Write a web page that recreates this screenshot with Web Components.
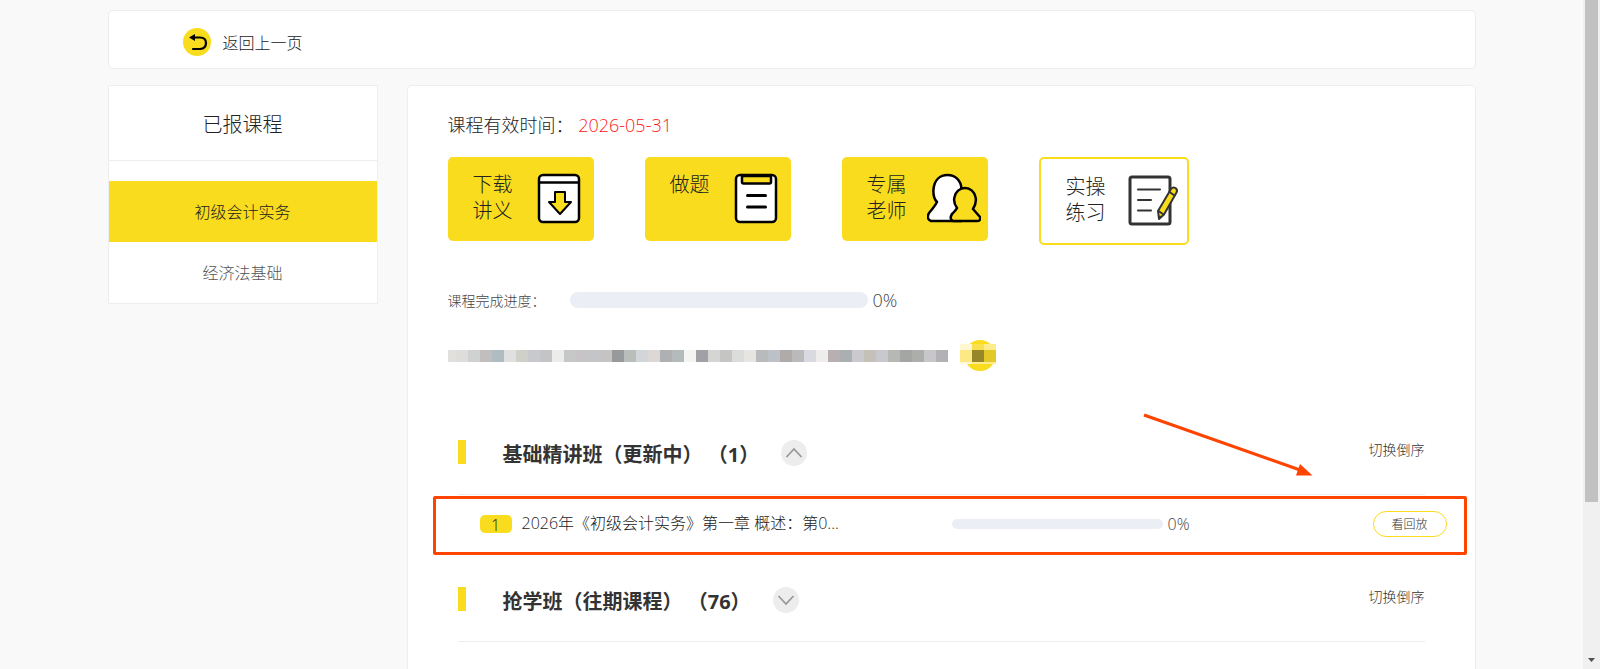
<!DOCTYPE html>
<html lang="zh-CN">
<head>
<meta charset="UTF-8">
<meta name="viewport" content="width=device-width, initial-scale=1.0">
<title>已报课程</title>
<style>
  body {
    margin: 0;
    background: #f9f9f9;
    color: #222;
    font-family: 'Open Sans', 'Noto Sans CJK SC', sans-serif;
    font-size: 16px;
    font-weight: 300;
    --yellow: #f9dc1e;
    --line: #eee;
    --mark: #ff4400;
  }
</style>
</head>
<body>
<course-page>
  <back-bar slot="top">返回上一页</back-bar>
  <course-menu slot="side" heading="已报课程" items='["初级会计实务","经济法基础"]'></course-menu>
  <course-detail date="2026-05-31">
    <tool-card slot="tools" icon="download">下载<br>讲义</tool-card>
    <tool-card slot="tools" icon="paper">做题</tool-card>
    <tool-card slot="tools" icon="teacher">专属<br>老师</tool-card>
    <tool-card slot="tools" icon="practice" outline>实操<br>练习</tool-card>
    <class-section heading="基础精讲班（更新中） （1）" open>
      <lesson-row no="1">2026年《初级会计实务》第一章 概述：第0...</lesson-row>
    </class-section>
    <class-section heading="抢学班（往期课程） （76）"></class-section>
  </course-detail>
</course-page>

<script>
const icons = {
  download: `
    <svg width="54" height="54" viewBox="0 0 54 54" fill="none" stroke="#000" stroke-width="2.500">
      <rect x="6" y="3" width="40" height="47" rx="4" fill="#fff"/>
      <path d="M6 10.500H46"/>
      <path d="M22 20h10v10h6L27 42 16 30h6z" fill="#f9dc1e" stroke-width="2" stroke-linejoin="round"/>
    </svg>`,
  paper: `
    <svg width="54" height="54" viewBox="0 0 54 54" fill="none" stroke="#000" stroke-width="2.500">
      <rect x="6" y="3" width="40" height="47" rx="4" fill="#fff"/>
      <path d="M12 4h29v6q0 1.500-1.500 1.500h-26Q12 11.500 12 10z" fill="#f9dc1e"/>
      <path d="M17.500 23.500h18M17.500 35h18" stroke-width="3" stroke-linecap="round"/>
    </svg>`,
  teacher: `
    <svg width="54" height="54" viewBox="0 0 54 54" stroke="#000" stroke-width="2.500" stroke-linejoin="round">
      <path d="M10 30C7 27 6 23 6.500 17 7.500 8 13 3 20.500 3S34 8 34.500 17v32H4Q-1 47 2 41Q8 34 10 30z" fill="#fff"/>
      <path d="M30 36C27 32 26.500 29 27.500 25c1-5 5-9 10.500-9s9.500 4 10.500 9c1 4 0 8-2.500 12l7 8Q54 49 50 49H26Q22 47 25 42Q29 38 30 36z" fill="#f9dc1e"/>
    </svg>`,
  practice: `
    <svg width="54" height="54" viewBox="0 0 54 54" fill="none" stroke="#333" stroke-width="2.500" stroke-linecap="round">
      <rect x="4" y="3" width="40" height="47" rx="2" fill="#fff" stroke-width="3"/>
      <path d="M12 15.500h22M12 26h13M12 36.500h13" stroke-width="2"/>
      <path d="M32 37 45 15q2-2.500 4.500-1 2.500 2 1 4.500L38 40.500 33 45z" fill="#f9dc1e" stroke-width="2" stroke-linejoin="round"/>
      <path d="M43.500 18l5 3.500M32.500 37l5 3.500M33 43.500l1-1" stroke-width="2"/>
    </svg>`,
  back: `
    <svg width="28" height="28" viewBox="0 0 28 28" fill="none">
      <circle cx="14" cy="14" r="14" fill="#f9dc1e"/>
      <path d="M11 9.500h6q6 0 6 5.500t-6 6h-7" stroke="#000" stroke-width="2.200" stroke-linecap="round"/>
      <path d="M6 9.500 12 6v7z" fill="#000"/>
    </svg>`,
  chevron: `
    <svg width="26" height="26" viewBox="0 0 26 26" fill="none">
      <circle cx="13" cy="13" r="13" fill="#ededed"/>
      <path d="M5.500 17 13 9l7.500 8" stroke="#999" stroke-width="1.800"/>
    </svg>`,
};

// 页面整体框架
class CoursePage extends HTMLElement {
  constructor() {
    super();
    this.attachShadow({ mode: 'open' }).innerHTML = `
<style>
  :host {
    display: flex;
    height: 100vh;
    overflow: hidden;
  }
  .page {
    flex: 1;
    min-width: 0;
    padding: 10px 20px 0;
  }
  .wrap {
    max-width: 1368px;
    margin: 0 auto;
  }
  .columns {
    display: flex;
    align-items: flex-start;
    gap: 29px;
    margin-top: 16px;
  }
  .scroll {
    display: flex;
    flex-direction: column;
    justify-content: space-between;
    align-items: center;
    width: 17px;
    background: #f0f0f0;
  }
  .thumb {
    width: 13px;
    height: 75%;
    background: #c1c1c1;
  }
  .scroll svg {
    margin-bottom: 7px;
  }
</style>
<div class="page">
  <div class="wrap">
    <slot name="top"></slot>
    <div class="columns">
      <slot name="side"></slot>
      <slot></slot>
    </div>
  </div>
</div>
<div class="scroll">
  <div class="thumb"></div>
  <svg width="7" height="4"><path d="M0 0h7L3.500 4z" fill="#505050"/></svg>
</div>`;
  }
}

class BackBar extends HTMLElement {
  constructor() {
    super();
    this.attachShadow({ mode: 'open' }).innerHTML = `
<style>
  :host {
    display: block;
    background: #fff;
    border: 1px solid var(--line);
    border-radius: 5px;
  }
  a {
    display: inline-flex;
    align-items: center;
    gap: 12px;
    height: 57px;
    margin-left: 74px;
    padding-top: 4px;
    box-sizing: border-box;
    color: inherit;
    text-decoration: none;
  }
</style>
<a href="#">${ icons.back }<slot></slot></a>`;
  }
}

// 左侧课程菜单
class CourseMenu extends HTMLElement {
  connectedCallback() {
    const items = JSON.parse(this.getAttribute('items'));
    this.attachShadow({ mode: 'open' }).innerHTML = `
<style>
  :host {
    display: block;
    flex: none;
    box-sizing: border-box;
    width: 270px;
    background: #fff;
    border: 1px solid var(--line);
  }
  h2 {
    margin: 0 0 20px;
    padding-top: 4px;
    border-bottom: 1px solid var(--line);
    font-size: 20px;
    font-weight: inherit;
    line-height: 70px;
    text-align: center;
  }
  a {
    display: block;
    padding-top: 1px;
    color: #555;
    line-height: 60px;
    text-align: center;
    text-decoration: none;
  }
  a.active {
    background: var(--yellow);
    color: #222;
  }
</style>
<h2>${ this.getAttribute('heading') }</h2>
<nav>
  ${ items.map((item, i) => `<a href="#" class="${ i === 0 ? 'active' : '' }">${ item }</a>`).join('') }
</nav>`;
  }
}

// 功能入口卡片
class ToolCard extends HTMLElement {
  connectedCallback() {
    this.attachShadow({ mode: 'open' }).innerHTML = `
<style>
  :host {
    display: block;
  }
  a {
    display: flex;
    justify-content: space-between;
    box-sizing: border-box;
    width: 146px;
    height: 84px;
    padding: 15px 7px 0 25px;
    border-radius: 5px;
    background: var(--yellow);
    color: inherit;
    font-size: 20px;
    line-height: 26px;
    text-decoration: none;
  }
  :host([outline]) a {
    width: 150px;
    height: 88px;
    border: 2px solid var(--yellow);
    background: #fff;
  }
</style>
<a href="#"><span><slot></slot></span>${ icons[this.getAttribute('icon')] }</a>`;
  }
}

class ProgressLine extends HTMLElement {
  connectedCallback() {
    this.attachShadow({ mode: 'open' }).innerHTML = `
<style>
  :host {
    display: flex;
    align-items: center;
    gap: 5px;
    color: #444;
    font-size: 16px;
  }
  .bar {
    width: 211px;
    height: 10px;
    border-radius: 100px;
    background: #ebeef5;
  }
  :host([large]) {
    font-size: 18px;
  }
  :host([large]) .bar {
    width: 298px;
    height: 16px;
  }
</style>
<div class="bar" role="progressbar" aria-label="完成进度" aria-valuenow="0" aria-valuemin="0" aria-valuemax="100"></div>
<span>0%</span>`;
  }
}

// 打码的一行信息
const cells = [
  '#e0e0dc', '#dedddb', '#cfd2d0', '#c1bfbd', '#afbcc2', '#e0e0e0', '#cfd0ca', '#c8c9cc', '#c4c4c6', '#ececea',
  '#c5c8c6', '#c6c4c6', '#c3c5c8', '#c6c4c2', '#98999b', '#b9beba', '#d2d6d8', '#ddd8d6', '#aeb0b3', '#b5babb',
  '#f4f4f2', '#a1a0a6', '#d5d5d3', '#c5c5c3', '#dbdddd', '#e6e5df', '#b8babc', '#bbc1c6', '#b0aaa8', '#bababa',
  '#d9dae1', '#efedeb', '#b8afb1', '#aaafb1', '#cac9ce', '#c6c1b8', '#c8c9ce', '#b7b8b3', '#a4a6a3', '#acaeab',
  '#c7c7c9', '#b4b1b6',
];

class MaskedInfo extends HTMLElement {
  connectedCallback() {
    const rects = cells.map((color, i) => {
      const x = i === 0 ? 0 : i * 12 - 4;
      return `<rect x="${ x }" y="10" width="${ i === 0 ? 8 : 12 }" height="12" fill="${ color }"/>`;
    }).join('');
    this.attachShadow({ mode: 'open' }).innerHTML = `
<style>
  :host {
    display: block;
    height: 31px;
  }
  svg {
    display: block;
  }
</style>
<svg width="560" height="31" shape-rendering="crispEdges">
  ${ rects }
  <circle cx="532" cy="15.500" r="15.500" fill="#f9dc1e" shape-rendering="auto"/>
  <path d="M512 4h12v20h-12z" fill="#fef7d2"/>
  <path d="M524 4h24v6h-24zM524 22h24v2h-24z" fill="#fcec8c"/>
  <path d="M524 4h12v6h-12z" fill="#f9e050"/>
  <path d="M512 10h12v12h-12z" fill="#fce985"/>
  <path d="M524 10h12v12h-12z" fill="#988729"/>
  <path d="M536 10h12v12h-12z" fill="#e3c928"/>
</svg>`;
  }
}

class CourseDetail extends HTMLElement {
  connectedCallback() {
    this.attachShadow({ mode: 'open' }).innerHTML = `
<style>
  :host {
    display: block;
    flex: 1;
    min-width: 0;
    min-height: 100vh;
    box-sizing: border-box;
    padding: 27px 40px 0;
    background: #fff;
    border: 1px solid var(--line);
    border-radius: 5px;
  }
  .date {
    margin: 0 0 20px;
    font-size: 18px;
    line-height: 24px;
  }
  .date span {
    color: #ff2020;
  }
  .tools {
    display: flex;
    align-items: flex-start;
    gap: 51px;
    height: 88px;
  }
  .progress {
    display: flex;
    align-items: center;
    gap: 24px;
    height: 26px;
    margin: 42px 0 27px;
    color: #444;
    font-size: 14px;
  }
  .sections {
    margin: 55px 10px 0;
  }
</style>
<p class="date">课程有效时间： <span>${ this.getAttribute('date') }</span></p>
<div class="tools"><slot name="tools"></slot></div>
<div class="progress">
  <span>课程完成进度：</span>
  <progress-line large></progress-line>
</div>
<masked-info></masked-info>
<div class="sections"><slot></slot></div>`;
  }
}

// 班级分组
class ClassSection extends HTMLElement {
  connectedCallback() {
    this.attachShadow({ mode: 'open' }).innerHTML = `
<style>
  :host {
    display: block;
    position: relative;
  }
  header {
    display: flex;
    align-items: center;
    height: 24px;
    padding: 14px 0 30px;
    border-bottom: 1px solid var(--line);
  }
  header::before {
    content: '';
    width: 8px;
    height: 24px;
    margin-right: 37px;
    background: var(--yellow);
  }
  h3 {
    margin: 2px 22px 0 0;
    color: #333;
    font-size: 20px;
    font-weight: 700;
    text-spacing-trim: space-all;
  }
  button {
    padding: 0;
    border: 0;
    background: none;
    color: #333;
    font: inherit;
    font-size: 14px;
    cursor: pointer;
  }
  .toggle {
    height: 26px;
  }
  .toggle svg {
    display: block;
  }
  :host(:not([open])) .toggle svg {
    transform: rotate(180deg);
  }
  .toggle {
    margin-top: 2px;
  }
  .sort {
    margin: 0 0 6px auto;
  }
  .list {
    display: none;
    height: 78px;
    padding-top: 1px;
    box-sizing: border-box;
  }
  :host([open]) .list {
    display: block;
  }
  .arrow {
    display: none;
    position: absolute;
    right: 112px;
    top: -13px;
  }
  :host([open]) .arrow {
    display: block;
  }
</style>
<header>
  <h3>${ this.getAttribute('heading') }</h3>
  <button class="toggle" aria-label="展开或收起">${ icons.chevron }</button>
  <button class="sort">切换倒序</button>
</header>
<div class="list"><slot></slot></div>
<svg class="arrow" width="170" height="64" fill="#ff4400">
  <path d="M1 2 157 57" stroke="#ff4400" stroke-width="3"/>
  <path d="M157 51 169.500 62.500H153z"/>
</svg>`;
    this.shadowRoot.querySelector('.toggle').addEventListener('click', () => {
      this.toggleAttribute('open');
    });
  }
}

// 单节课程
class LessonRow extends HTMLElement {
  connectedCallback() {
    this.attachShadow({ mode: 'open' }).innerHTML = `
<style>
  :host {
    display: flex;
    align-items: center;
    box-sizing: border-box;
    height: 59px;
    margin: 0 -42px 0 -25px;
    padding: 0 17px 4px 44px;
    border: 3px solid var(--mark);
    border-radius: 2px;
  }
  .no {
    width: 32px;
    margin-right: 10px;
    padding-top: 2px;
    border-radius: 5px;
    background: var(--yellow);
    line-height: 16px;
    text-align: center;
  }
  .title {
    width: 430px;
    margin-bottom: 4px;
    white-space: nowrap;
  }
  button {
    width: 74px;
    height: 26px;
    margin-left: auto;
    padding: 0;
    border: 1px solid var(--yellow);
    border-radius: 13px;
    background: #fff;
    color: #333;
    font: inherit;
    font-size: 12px;
    cursor: pointer;
  }
</style>
<span class="no">${ this.getAttribute('no') }</span>
<span class="title"><slot></slot></span>
<progress-line></progress-line>
<button>看回放</button>`;
  }
}

customElements.define('course-page', CoursePage);
customElements.define('back-bar', BackBar);
customElements.define('course-menu', CourseMenu);
customElements.define('tool-card', ToolCard);
customElements.define('progress-line', ProgressLine);
customElements.define('masked-info', MaskedInfo);
customElements.define('course-detail', CourseDetail);
customElements.define('class-section', ClassSection);
customElements.define('lesson-row', LessonRow);
</script>
</body>
</html>
